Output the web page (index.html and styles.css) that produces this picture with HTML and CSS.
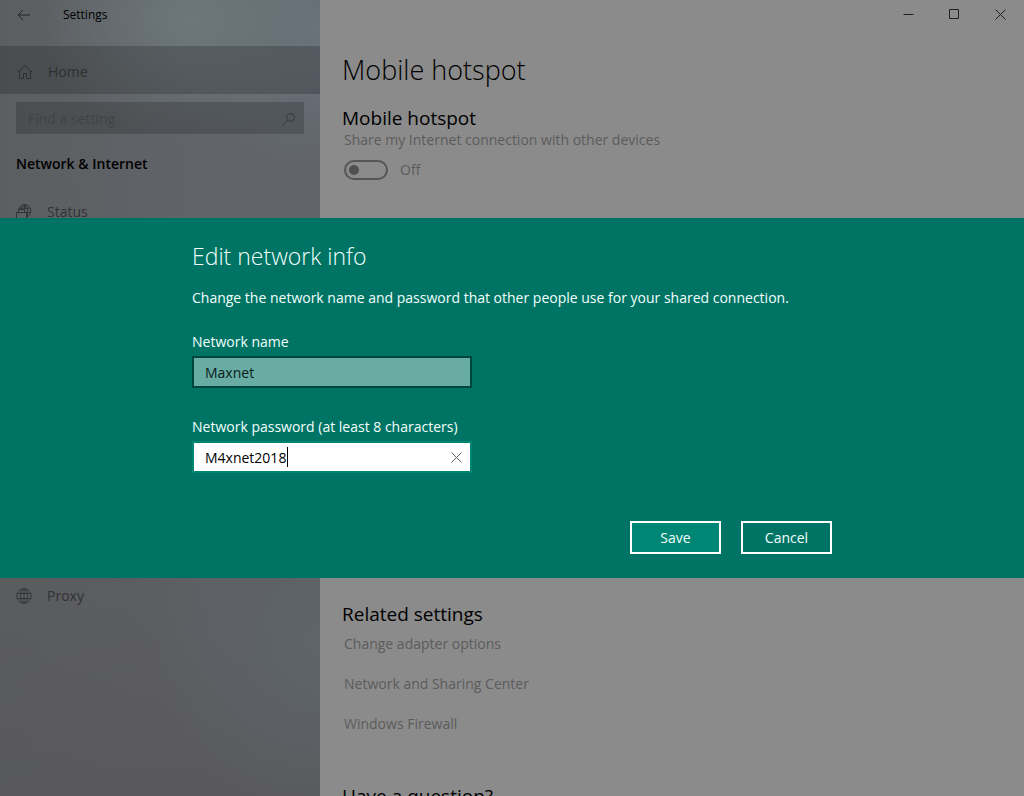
FILE: index.html
```html
<!DOCTYPE html>
<html lang="en">
<head>
<meta charset="utf-8">
<meta name="viewport" content="width=device-width, initial-scale=1">
<title>Settings</title>
<link rel="stylesheet" href="styles.css">
</head>
<body>
<div class="window">
  <aside class="sidebar">
    <header class="titlebar">
      <button class="back" aria-label="Back"><svg width="14" height="12" viewBox="0 0 14 12"><path d="M13 6H1M6 1L1 6l5 5"/></svg></button>
      <span>Settings</span>
    </header>
    <a class="nav-item home" href="#home">
      <svg width="16" height="16" viewBox="0 0 16 16"><path d="M1 8L8 1.500 15 8M2.500 7v7.500h4V9.500h3v5h4V7"/></svg>
      <span>Home</span>
    </a>
    <label class="search">
      <input type="search" placeholder="Find a setting" aria-label="Find a setting">
      <svg width="14" height="14" viewBox="0 0 14 14"><circle cx="8.500" cy="5.500" r="4"/><path d="M5.500 8.500L1 13"/></svg>
    </label>
    <h2 class="section-title">Network &amp; Internet</h2>
    <nav class="nav">
      <a class="nav-item" href="#status">
        <svg width="16" height="16" viewBox="0 0 16 16"><path d="M2.500 5.500C3.500 2.500 5.800.7 8.500.7c3.700 0 6.300 2.800 6.300 6.300 0 3-1.800 5.400-4.300 6.200M3.300 4.200h10.900M2 8.500h12.600M8.500.7v7.600M8.500.7C6.500 2 5.500 4 5.400 5.500M8.500.7c3.500 2.500 4 8.500 2 12.500M.6 8.500h9.900v6.800H.6zM2.500 8.500v-3h6v3"/></svg>
        <span>Status</span>
      </a>
      <a class="nav-item" href="#proxy">
        <svg width="16" height="16" viewBox="0 0 17 17"><circle cx="8.500" cy="8.500" r="7.700"/><ellipse cx="8.500" cy="8.500" rx="3.700" ry="7.700"/><path d="M8.500.8v15.400M1.500 5.800h14M1.500 11.200h14"/></svg>
        <span>Proxy</span>
      </a>
    </nav>
  </aside>
  <main class="main">
    <div class="controls">
      <button aria-label="Minimize"><svg width="11" height="11" viewBox="0 0 11 11"><path d="M.5 5.500h10"/></svg></button>
      <button aria-label="Maximize"><svg width="11" height="11" viewBox="0 0 11 11"><path d="M.5.5h9v9h-9z"/></svg></button>
      <button aria-label="Close"><svg width="11" height="11" viewBox="0 0 11 11"><path d="M.5.5l10 10M10.500.5l-10 10"/></svg></button>
    </div>
    <div class="content">
      <section class="hotspot">
        <h1>Mobile hotspot</h1>
        <h2>Mobile hotspot</h2>
        <p id="share">Share my Internet connection with other devices</p>
        <label class="switch"><input type="checkbox" role="switch" aria-describedby="share"><span>Off</span></label>
      </section>
      <section class="related">
        <h2>Related settings</h2>
        <a href="#adapter">Change adapter options</a>
        <a href="#sharing">Network and Sharing Center</a>
        <a href="#firewall">Windows Firewall</a>
      </section>
      <h2>Have a question?</h2>
    </div>
  </main>
</div>
<div class="overlay">
  <section class="dialog" role="dialog" aria-modal="true" aria-labelledby="dialog-title">
    <form class="form">
      <h1 id="dialog-title">Edit network info</h1>
      <p>Change the network name and password that other people use for your shared connection.</p>
      <div class="field">
        <label for="name">Network name</label>
        <input id="name" type="text" value="Maxnet">
      </div>
      <div class="field">
        <label for="password">Network password (at least 8 characters)</label>
        <div class="active">
          <input id="password" type="text" value="M4xnet2018">
          <span class="caret"></span>
          <button class="clear" type="button" aria-label="Clear"><svg width="11" height="11" viewBox="0 0 11 11"><path d="M.5.5l10 10M10.500.5l-10 10"/></svg></button>
        </div>
      </div>
      <div class="actions">
        <button class="save" type="button">Save</button>
        <button type="button">Cancel</button>
      </div>
    </form>
  </section>
</div>
</body>
</html>
```
FILE: styles.css
```css
* { box-sizing: border-box; }
body {
  margin: 0;
  height: 100vh;
  overflow: hidden;
  background: #8b8b8b;
  color: #000;
  font: 14px/20px "Segoe UI", "Open Sans", sans-serif;
}
h1, h2, p { margin: 0; font-weight: 400; }
a { color: inherit; text-decoration: none; }
button, input { font: inherit; color: inherit; }
button { background: none; border: 0; padding: 0; }
svg { display: block; fill: none; stroke: currentColor; stroke-width: 1; flex: none; }

.window { display: flex; height: 100vh; overflow: hidden; }

.sidebar {
  flex: 0 0 320px;
  background:
    radial-gradient(ellipse 150px 120px at 190px 20px, #6d777a 0%, #6d777a00 100%),
    radial-gradient(ellipse 160px 150px at 320px 30px, #69727a 0%, #69727a00 100%),
    radial-gradient(ellipse 180px 180px at 330px 640px, #5e656a 0%, #5e656a00 100%),
    linear-gradient(to right, #58595980, #5c5d6000 60%),
    linear-gradient(#606469 0%, #606368 28%, #5d5e62 75%, #59595c 100%);
}
.titlebar { display: flex; align-items: center; gap: 32px; height: 46px; padding: 0 17px 16px; font-size: 12px; }
.back { display: flex; color: #222426; }
.nav-item { display: flex; align-items: center; gap: 15px; height: 48px; padding: 1px 16px 0; color: #303235; }
.nav-item.home { background: #00000030; padding: 3px 17px 0; color: #2d3031; }
.search {
  display: flex;
  align-items: center;
  height: 32px;
  margin: 8px 16px 20px;
  padding: 1px 8px 0 12px;
  background: #0000002c;
  color: #35393b;
}
.search input { flex: 1; min-width: 0; padding: 0; background: none; border: 0; }
.search input::placeholder { color: #414445; opacity: 1; }
.section-title { padding: 0 16px; font-size: 14px; font-weight: 600; }
.nav { display: grid; gap: 336px; margin-top: 13px; }

.main { flex: 1; min-width: 0; }
.controls { display: flex; justify-content: flex-end; height: 28px; padding-right: 1px; }
.controls button { display: grid; place-items: center; width: 46px; color: #202020; }
.content { padding: 22px; color: #5c5c5c; }
.content h1 { font-size: 27px; line-height: 40px; font-weight: 300; color: #000; }
.content h2 { font-size: 19px; line-height: 28px; color: #000; }
.content p, .content a, .switch { margin-left: 2px; }
.hotspot { display: grid; height: 130px; grid-template-rows: 54px 26px 20px 30px; }
.switch { display: flex; align-items: center; gap: 12px; padding-top: 10px; }
.switch input {
  appearance: none;
  display: flex;
  align-items: center;
  width: 44px;
  height: 20px;
  margin: 0;
  padding: 0 3px;
  border: 2px solid #555;
  border-radius: 10px;
}
.switch input::before { content: ""; width: 10px; height: 10px; border-radius: 50%; background: #505050; }
.related { display: grid; justify-items: start; row-gap: 20px; margin: 420px 0 48px; }
.related h2 { margin-bottom: -14px; }

.overlay { position: fixed; inset: 0; display: flex; align-items: center; }
.dialog { width: 100%; padding: 22px 24px 24px; background: #007464; color: #f2fffc; }
.form { max-width: 640px; margin: 0 auto; }
.form h1 { font-size: 23px; line-height: 32px; font-weight: 300; }
.form p { margin: 16px 0 24px; }
.field { display: grid; gap: 4px; width: 280px; margin-bottom: 29px; }
.field input { width: 100%; height: 32px; padding: 0 11px; border: 2px solid #00473e; border-radius: 0; background: #68aca4; color: #0a1e1b; outline: 0; }
.active { position: relative; }
.active input { border-color: #008574; background: #fff; color: #000; caret-color: transparent; }
.caret { position: absolute; left: 95px; top: 6px; width: 1px; height: 20px; background: #000; }
.clear { position: absolute; right: 2px; top: 2px; width: 28px; height: 28px; display: grid; place-items: center; color: #666; }
.actions { display: flex; justify-content: flex-end; gap: 20px; margin-top: 48px; }
.actions button { width: 91px; height: 33px; border: 2px solid #fff; }
.actions .save { background: #008675; }
```
